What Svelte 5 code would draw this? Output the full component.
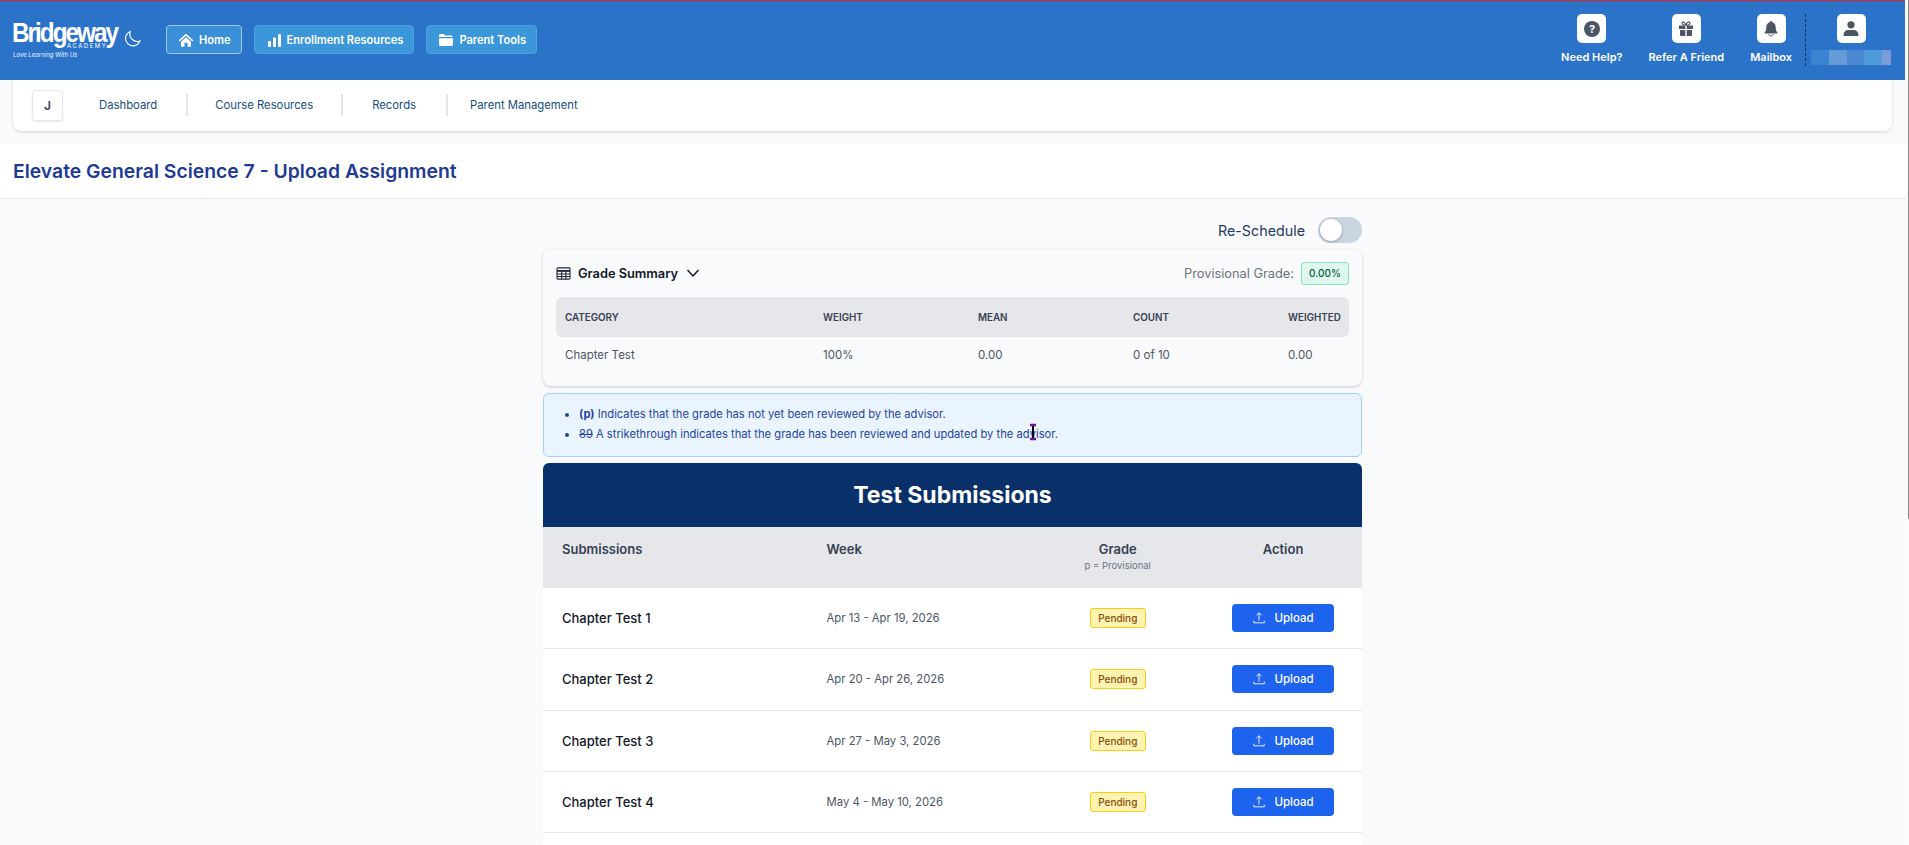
<script>
  const rows = [
    ['Chapter Test 1', 'Apr 13 - Apr 19, 2026'],
    ['Chapter Test 2', 'Apr 20 - Apr 26, 2026'],
    ['Chapter Test 3', 'Apr 27 - May 3, 2026'],
    ['Chapter Test 4', 'May 4 - May 10, 2026']
  ];
  const subnav = ['Dashboard', 'Course Resources', 'Records', 'Parent Management'];
</script>

<div class="page">
  <div class="main">
    <header class="top">
      <div class="logo">
        <div class="logo-word">Bridgeway</div>
        <div class="logo-ac">ACADEMY</div>
        <div class="logo-tag">Love Learning With Us</div>
        <svg class="moon" viewBox="0 0 24 24" width="17" height="17" fill="none" stroke="#fff" stroke-width="1.600"><path d="M9 2a10.500 10.500 0 1 0 13.500 13.500A10.500 10.500 0 0 1 9 2z"/></svg>
      </div>
      <nav class="mainnav">
        <button class="navbtn active">
          <svg viewBox="0 0 24 24" width="16" height="16" fill="#fff"><path d="M12 2.500 1 12.500l1.600 1.800L12 5.800l9.400 8.500 1.600-1.800z"/><path d="M4.500 14.800 12 8l7.500 6.800V22H14.300v-6H9.700v6H4.500z"/></svg>
          Home
        </button>
        <button class="navbtn">
          <svg viewBox="0 0 16 16" width="16" height="16" fill="#fff"><rect x="2" y="9" width="3" height="6" rx="1"/><rect x="7" y="5.500" width="3" height="9.500" rx="1"/><rect x="12" y="2" width="3" height="13" rx="1"/></svg>
          Enrollment Resources
        </button>
        <button class="navbtn">
          <svg viewBox="0 0 16 16" width="16" height="16" fill="#fff"><path d="M1 3.500C1 2.700 1.700 2 2.500 2h3.300l1.500 1.600H13c.8 0 1.500.6 1.500 1.400H1z"/><path d="M1 6.200h14v6.300c0 .8-.7 1.500-1.500 1.500h-11C1.700 14 1 13.300 1 12.500z"/></svg>
          Parent Tools
        </button>
      </nav>
      <div class="spacer"></div>
      <div class="tools">
        <div class="tool">
          <span class="ico"><svg viewBox="0 0 16 16" width="16" height="16"><circle cx="8" cy="8" r="8" fill="#4b5563"/><text x="8" y="12" text-anchor="middle" class="q">?</text></svg></span>
          <span class="lbl">Need Help?</span>
        </div>
        <div class="tool">
          <span class="ico"><svg viewBox="0 0 16 16" width="16" height="16" fill="#4b5563"><path d="M1 4.500h6.300V8H1zM8.700 4.500H15V8H8.700zM2 9h5.300v6H3a1 1 0 0 1-1-1zM8.700 9H14v5a1 1 0 0 1-1 1H8.700z"/><path d="M8 4.300C7 1 5.200.5 4.400 1.300c-.9.9-.2 3 3.600 3zm0 0c1-3.300 2.800-3.800 3.600-3 .9.900.2 3-3.600 3z" fill="none" stroke="#4b5563" stroke-width="1.100"/></svg></span>
          <span class="lbl">Refer A Friend</span>
        </div>
        <div class="tool">
          <span class="ico"><svg viewBox="0 0 16 16" width="16" height="16" fill="#4b5563"><path d="M8 0a1.200 1.200 0 0 0-1.100 1.300C4.700 1.800 3.300 3.600 3.300 6c0 3-.6 4.300-1.600 5.300-.4.500 0 1.200.5 1.200h11.600c.6 0 .9-.7.500-1.200-1-1-1.600-2.300-1.600-5.300 0-2.400-1.400-4.200-3.600-4.700A1.200 1.200 0 0 0 8 0z"/><path d="M5.700 13.300a2.400 2.400 0 0 0 4.600 0" fill="none" stroke="#4b5563" stroke-width="1"/></svg></span>
          <span class="lbl">Mailbox</span>
        </div>
        <div class="tool user">
          <span class="ico"><svg viewBox="0 0 16 16" width="16" height="16" fill="#4b5563"><circle cx="8" cy="3.800" r="3.600"/><path d="M1.500 15c-.6 0-1-.4-1-1 0-3 2.300-5 4.800-5h5.400c2.500 0 4.800 2 4.800 5 0 .6-.4 1-1 1z"/></svg></span>
          <span class="blur"><i></i><i></i><i></i><i></i><i></i></span>
        </div>
      </div>
    </header>

    <div class="subwrap">
      <div class="subnav">
        <span class="j">J</span>
        {#each subnav as s, i}
          <span class="subitem s{i}">{s}</span>
        {/each}
      </div>
    </div>

    <div class="titlebar"><h1>Elevate General Science 7 - Upload Assignment</h1></div>

    <main class="content">
      <div class="col">
        <div class="resched">
          <span>Re-Schedule</span>
          <span class="toggle"><span class="knob"></span></span>
        </div>

        <section class="grade">
          <div class="ghead">
            <svg viewBox="0 0 16 14" width="15" height="13" fill="none" stroke="#1f2937" stroke-width="1.200"><rect x="1" y="1" width="14" height="12" rx="1"/><path d="M1 4.200h14" stroke-width="2"/><path d="M1 7.500h14M1 10.300h14M6 4v9M10.500 4v9"/></svg>
            <strong>Grade Summary</strong>
            <svg class="chev" viewBox="0 0 16 16" width="16" height="16" fill="none" stroke="#111827" stroke-width="1.500"><path d="m2.500 5 5.500 6 5.500-6"/></svg>
            <span class="spacer"></span>
            <span class="pg">Provisional Grade:</span>
            <span class="pct">0.00%</span>
          </div>
          <div class="gtable gth">
            <span>CATEGORY</span><span>WEIGHT</span><span>MEAN</span><span>COUNT</span><span>WEIGHTED</span>
          </div>
          <div class="gtable gtd">
            <span>Chapter Test</span><span>100%</span><span>0.00</span><span>0 of 10</span><span>0.00</span>
          </div>
        </section>

        <section class="info">
          <ul>
            <li><b>(p)</b> Indicates that the grade has not yet been reviewed by the advisor.</li>
            <li><s>89</s> A strikethrough indicates that the grade has been reviewed and updated by the advisor.</li>
          </ul>
          <svg class="cursor" viewBox="0 0 10 18" width="10" height="18"><path d="M5 2v14" stroke="#000" stroke-width="2"/><path d="M2 2h6M2 16h6" stroke="#70129a" stroke-width="2.500"/></svg>
        </section>

        <section class="subs">
          <h2>Test Submissions</h2>
          <div class="row thead">
            <span class="c1">Submissions</span>
            <span class="c2">Week</span>
            <span class="c3">Grade<small>p = Provisional</small></span>
            <span class="c4">Action</span>
          </div>
          {#each rows as r}
            <div class="row tr">
              <span class="c1 name">{r[0]}</span>
              <span class="c2 wk">{r[1]}</span>
              <span class="c3"><span class="pending">Pending</span></span>
              <span class="c4">
                <button class="upload">
                  <svg viewBox="0 0 16 16" width="14" height="14" fill="none" stroke="#fff" stroke-width="1"><path d="M8 11V2M5 5l3-3 3 3M2 11v2.500h12V11"/></svg>
                  Upload
                </button>
              </span>
            </div>
          {/each}
        </section>
      </div>
    </main>
  </div>
  <div class="scrollbar"><div class="thumb"></div></div>
</div>

<style>
  :global(html), :global(body) { margin: 0; height: 845px; overflow: hidden; background: #f9fafb; }
  .page { height: 845px; overflow: hidden; display: flex; font-family: Inter, "Liberation Sans", sans-serif; color: #111827; }
  .main { width: 1905px; flex: none; height: 845px; overflow: hidden; }
  button { font-family: inherit; cursor: pointer; }
  .spacer { flex: 1; }

  .top { height: 79px; background: #2b72c9; border-top: 1px solid #dc2626; display: flex; align-items: flex-start; padding-right: 14px; }
  .logo { position: relative; width: 166px; height: 79px; flex: none; color: #fff; }
  .logo-word { position: absolute; left: 12px; top: 14px; font: 700 27px/36px "Liberation Sans Narrow", "Liberation Sans", sans-serif; letter-spacing: -2.200px; transform: scaleX(.9); transform-origin: left; }
  .logo-ac { position: absolute; left: 67px; top: 41px; font: 400 6px/8px Inter, sans-serif; letter-spacing: 1.500px; }
  .logo-tag { position: absolute; left: 13px; top: 49px; font: italic 400 6px/9px Inter, sans-serif; opacity: .95; }
  .moon { position: absolute; left: 124px; top: 29px; }
  .mainnav { display: flex; gap: 12px; padding-top: 24px; }
  .navbtn { height: 29px; display: flex; align-items: center; gap: 5px; padding: 0 10px 0 11px; border-radius: 4px; background: #3b97d9; border: 1px solid #4aa3df; color: #fff; font-size: 11.100px; font-weight: 600; box-sizing: border-box; }
  .navbtn.active { border-color: #9ccdf0; background: #3a8fd6; }

  .tools { display: flex; padding-top: 13px; gap: 26px; }
  .tool { display: flex; flex-direction: column; align-items: center; gap: 6px; }
  .ico { width: 29px; height: 29px; background: #fff; border-radius: 5px; display: flex; align-items: center; justify-content: center; }
  .q { font: 700 11px Inter, sans-serif; fill: #fff; }
  .lbl { color: #fff; font-size: 11px; font-weight: 600; line-height: 16px; white-space: nowrap; }
  .user { margin-left: -13px; padding-left: 5px; border-left: 1px dashed #0b2f6b; height: 52px; width: 80px; }
  .blur { display: flex; width: 80px; height: 15px; margin-top: 1px; }
  .blur i { flex: 1; background: #3b84d1; }
  .blur i:nth-child(2) { background: #659cd8; }
  .blur i:nth-child(3) { background: #4c88d0; }
  .blur i:nth-child(4) { background: #4f9ad9; }
  .blur i:nth-child(5) { background: #7a9cd8; flex: .5; }

  .subwrap { background: #f9fafb; padding: 0 13px; height: 64px; box-sizing: border-box; }
  .subnav { height: 51px; box-sizing: border-box; padding-bottom: 1px; background: #fff; border-radius: 0 0 8px 8px; box-shadow: 0 1px 3px rgba(0,0,0,.15); display: flex; align-items: center; padding-left: 19px; font-size: 11.300px; color: #164e7a; }
  .j { width: 31px; height: 31px; border: 1px solid #e5e7eb; border-radius: 4px; display: flex; align-items: center; justify-content: center; font-weight: 600; color: #374151; box-shadow: 0 1px 2px rgba(0,0,0,.1); margin-right: 36px; box-sizing: border-box; font-size: 12px; }
  .subitem { line-height: 22px; border-right: 2px solid #e2e5e9; white-space: nowrap; }
  .subitem.s0 { padding-right: 29px; margin-right: 27px; }
  .subitem.s1 { padding-right: 28px; margin-right: 29px; }
  .subitem.s2 { padding-right: 30px; margin-right: 22px; }
  .subitem.s3 { border: 0; }

  .titlebar { height: 55px; background: #fff; border-bottom: 1px solid #e5e7eb; box-sizing: border-box; display: flex; align-items: center; padding: 0 0 1px 13px; }
  h1 { margin: 0; font-size: 19.350px; font-weight: 600; color: #1e3a94; }

  .content { display: flex; justify-content: center; }
  .col { width: 819px; }
  .resched { display: flex; justify-content: flex-end; align-items: center; gap: 13px; height: 26px; margin-top: 18px; font-size: 14.300px; color: #1f3a5f; }
  .toggle { width: 44px; height: 26px; background: #cbd5e1; border-radius: 13px; display: block; position: relative; }
  .knob { position: absolute; left: 2px; top: 2px; width: 22px; height: 22px; border-radius: 50%; background: #fff; box-shadow: 0 1px 3px rgba(0,0,0,.3); }

  .grade { margin-top: 6px; height: 137px; padding: 0 13px; border-radius: 8px; background: #f9fafb; box-shadow: 0 1px 3px rgba(0,0,0,.2); }
  .ghead { height: 48px; display: flex; align-items: center; font-size: 12.800px; }
  .ghead strong { margin-left: 7px; font-weight: 600; color: #111827; }
  .chev { margin-left: 7px; }
  .pg { color: #6b7280; font-size: 12.800px; margin-right: 7px; }
  .pct { font-size: 10px; font-weight: 500; color: #065f46; background: #dff7ec; border: 1px solid #86e2bc; border-radius: 3px; width: 48px; height: 23px; display: flex; align-items: center; justify-content: center; box-sizing: border-box; }
  .gtable { display: grid; grid-template-columns: 258px 155px 155px 155px 1fr; padding: 0 8px 0 9px; align-items: center; }
  .gth { height: 40px; background: #e5e7eb; border-radius: 6px; font-size: 9.800px; font-weight: 600; color: #374151; }
  .gtd { height: 36px; font-size: 11.500px; color: #4b5563; }

  .info { position: relative; margin-top: 7px; height: 64px; box-sizing: border-box; background: #eaf4ff; border: 1px solid #a7cdfa; border-radius: 6px; color: #2645a0; font-size: 11.200px; }
  .info ul { margin: 0; padding: 10px 0 0 35px; }
  .info li { line-height: 20px; }
  .cursor { position: absolute; left: 484px; top: 29px; }

  .subs { margin-top: 6px; border-radius: 6px 6px 0 0; overflow: hidden; background: #fff; height: 400px; }
  h2 { margin: 0; height: 64px; background: #0a3069; color: #fff; display: flex; align-items: center; justify-content: center; font-size: 23px; font-weight: 700; }
  .row { display: grid; grid-template-columns: 264.500px 205px 172.500px 158px; padding-left: 19px; }
  .thead { height: 61px; background: #e5e7eb; color: #374151; font-size: 13px; font-weight: 600; padding-top: 14px; box-sizing: border-box; line-height: 16px; }
  .thead small { display: block; font-size: 9.500px; font-weight: 400; color: #6b7280; margin-top: 3px; line-height: 12px; }
  .c3, .c4 { text-align: center; }
  .tr { height: 61.300px; align-items: center; border-bottom: 1.500px solid #e5e7eb; box-sizing: border-box; }
  .name { font-size: 13px; font-weight: 500; color: #111827; }
  .wk { font-size: 11.300px; color: #4b5563; }
  .pending { display: inline-flex; align-items: center; justify-content: center; width: 56px; height: 20px; box-sizing: border-box; font-size: 10px; font-weight: 500; color: #854d0e; background: #fef3b0; border: 1px solid #facc15; border-radius: 3px; vertical-align: middle; position: relative; top: -1px; }
  .upload { height: 28px; width: 102px; display: inline-flex; align-items: center; justify-content: center; gap: 8px; background: #1d63ed; color: #fff; border: 0; border-radius: 4px; font-size: 11.500px; font-weight: 500; vertical-align: middle; }

  .scrollbar { width: 4px; flex: none; height: 845px; background: #fbfbfb; display: flex; justify-content: flex-end; }
  .thumb { width: 1px; height: 519px; background: #8a8a8a; }
</style>
